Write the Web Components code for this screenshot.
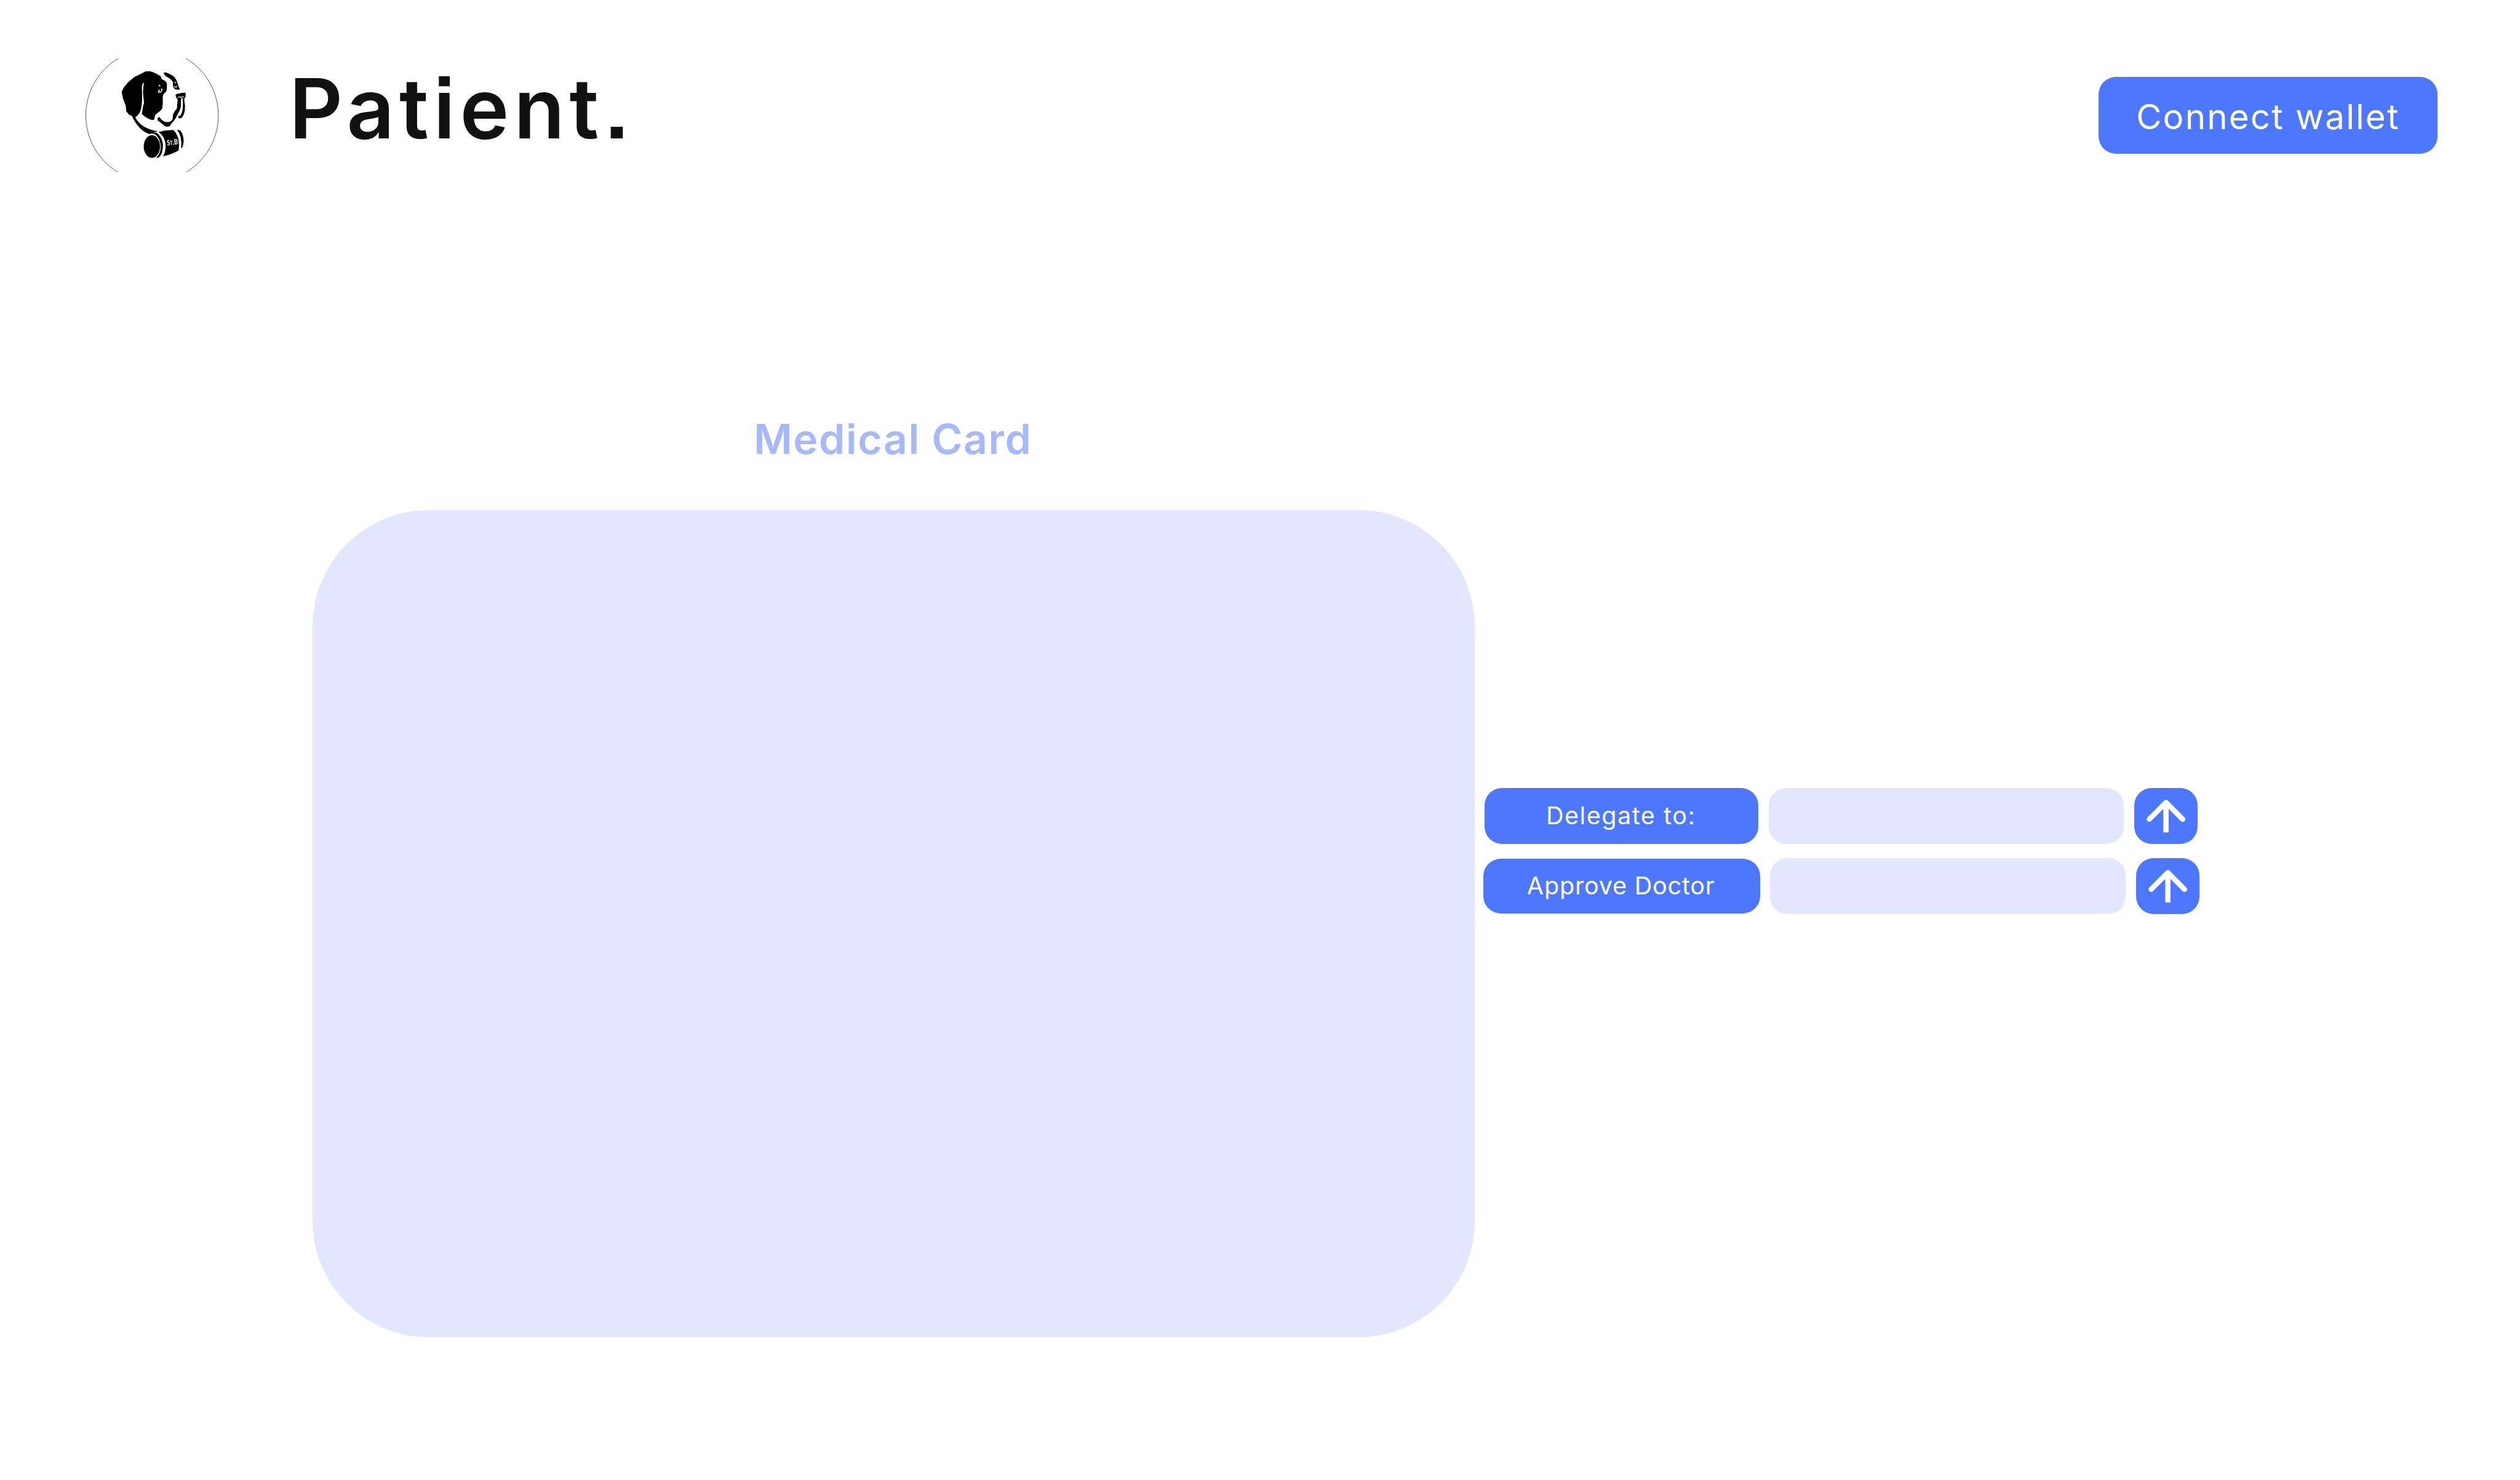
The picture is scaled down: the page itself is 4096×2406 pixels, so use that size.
<!DOCTYPE html>
<html lang="en">
<head>
<meta charset="utf-8">
<title>Patient</title>
<style>
  /* 1rem = 10 design units; the design canvas is 4320 units wide */
  html { font-size: calc(100vw / 432); }
  body { margin: 0; background: #fff; font-family: Inter, "Liberation Sans", sans-serif; font-feature-settings: "ss07", "ss08"; overflow: hidden; }
</style>
</head>
<body>
<patient-page></patient-page>

<template id="t-page">
  <style>
    :host { display: flex; flex-direction: column; width: 432rem; height: 253.8rem; box-sizing: border-box; }
    main { display: flex; align-items: flex-start; padding-left: 53.55rem; }
    .actions { display: flex; flex-direction: column; align-items: center; margin: 95.72rem 0 0 1.47rem; }
    .actions action-row + action-row { margin-top: 2.37rem; }
  </style>
  <app-header></app-header>
  <main>
    <medical-card>Medical Card</medical-card>
    <div class="actions">
      <action-row style="--label-w:46.85rem;--label-h:9.63rem;--ls:.0391em">Delegate to:</action-row>
      <action-row style="--label-w:47.45rem;--label-h:9.3rem;--ls:.0204em">Approve Doctor</action-row>
    </div>
  </main>
</template>

<template id="t-header">
  <style>
    :host { display: flex; height: 39.4rem; align-items: flex-start; box-sizing: border-box; padding: 9.9rem 14.1rem 0 14.6rem; }
    h1 { margin: 0 auto 0 11.76rem; height: 17.5rem; line-height: 17.5rem; font-size: 14.25rem; font-weight: 600; letter-spacing: .0574em; color: #111; white-space: nowrap; }
    pill-button { margin-top: 3.3rem; }
  </style>
  <brand-logo></brand-logo>
  <h1>Patient.</h1>
  <pill-button>Connect wallet</pill-button>
</template>

<template id="t-pill">
  <style>
    :host { display: block; }
    button { all: unset; box-sizing: border-box; display: flex; align-items: center; justify-content: center; width: 58.2rem; height: 13.18rem; padding-top: .5rem; border-radius: 3rem; background: #4d77ff; color: #fff; font-size: 5.95rem; letter-spacing: .039em; line-height: 1.2; white-space: nowrap; }
  </style>
  <button><slot></slot></button>
</template>

<template id="t-card">
  <style>
    :host { display: flex; flex-direction: column; width: 199.23rem; padding-top: 30.85rem; }
    h2 { margin: 0; height: 10rem; line-height: 10rem; padding-right: .18rem; text-align: center; font-size: 7.15rem; font-weight: 600; letter-spacing: .0236em; color: #a6b9ff; }
    section { margin-top: 7.15rem; height: 141.93rem; border-radius: 20rem; background: #e2e7ff; }
  </style>
  <h2><slot></slot></h2>
  <section></section>
</template>

<template id="t-row">
  <style>
    :host { display: flex; align-items: center; gap: 1.78rem; height: 9.63rem; }
    .label { display: flex; align-items: center; justify-content: center; box-sizing: border-box; width: var(--label-w); height: var(--label-h); padding-right: .2rem; border-radius: 3rem; background: #4d77ff; color: #fff; font-size: 4.17rem; letter-spacing: var(--ls); line-height: 1.2; white-space: nowrap; }
    .field { width: 60.9rem; height: 9.63rem; border-radius: 3rem; background: #e2e7ff; }
    .go { display: block; width: 10.87rem; height: 9.63rem; border-radius: 3rem; background: #4d77ff; }
    svg { display: block; width: 100%; height: 100%; }
  </style>
  <div class="label"><slot></slot></div>
  <div class="field"></div>
  <div class="go">
    <svg viewBox="0 0 108.7 96.3" fill="none" stroke="#fff" stroke-width="9">
      <path d="M25.8 53.5 54.4 24.9 83 53.5" stroke-linecap="round" stroke-linejoin="round"/>
      <path d="M54.4 26V76.2"/>
    </svg>
  </div>
</template>

<template id="t-logo">
  <style>
    :host { display: block; width: 23.2rem; height: 19.6rem; }
    svg { display: block; width: 100%; height: 100%; }
  </style>
  <svg viewBox="48 57 696 588">
    <clipPath id="band"><rect x="48" y="60" width="696" height="584"/></clipPath>
    <circle cx="393.500" cy="353" r="341" fill="none" stroke="#222" stroke-width="2.400" clip-path="url(#band)"/>
    <!-- ear, face and collar strap -->
    <path d="M237 233 248 210 270 183 302 156 335 140 360 127Q375 124 391 128L412 137 438 152Q440 164 446 168L460 176Q467 180 470 190L469 222Q467 231 460 236 450 243 448 256L449 285Q448 305 445 319 441 327 428 336 411 346 409 354L404 375Q396 378 386 375 360 366 341 346 343 330 347 308L352 288 348 250Q345 220 352 184 342 190 341 208L342 240 342 275Q340 320 329 340 320 354 307 363 320 389 350 410 380 428 425 436L404 440 380 449Q345 438 322 408 300 382 291 357L275 350 261 333 258 303 245 270Z"/>
    <path fill="#fff" d="M432 196 438 202 432 204 426 200ZM428 220 434 222 430 231Q440 232 441 222L439 216Q446 214 447 220 445 232 438 236L423 236Z"/>
    <!-- far brow -->
    <path d="M453 133Q463 130 475 136 497 144 510 158 521 170 525 190L531 208 537 221 514 220Q502 212 501 202L500 180Q492 166 476 158 460 151 456 142Z"/>
    <path fill="#fff" d="M509 181 516 182 516 188 510 187ZM508 199Q512 208 518 206L518 199 522 202 521 210 508 210Z"/>
    <!-- nose, muzzle and chin -->
    <path d="M514 248Q516 243 528 241 545 236 566 236L566 256Q559 264 559 276 565 300 562 328 559 348 548 363 540 371 530 367 525 361 530 355L540 354Q552 332 552 300L551 266 546 261 542 275 541 312Q534 335 524 350 515 370 505 382 493 392 484 409 471 414 459 408 446 397 432 386L422 379Q420 369 427 361 436 364 441 374 455 387 472 388 489 388 498 374 501 366 501 349 507 332 521 318L524 285 525 273Q515 262 514 248Z"/>
    <path d="M527 263Q533 254 542 261 551 250 557 261" fill="none" stroke="#fff" stroke-width="3.500"/>
    <!-- barrel -->
    <ellipse cx="392.500" cy="513.500" rx="42" ry="58.500"/>
    <path d="M382 448Q400 438 418 443 443 461 449 500 451 545 430 569L412 572Q436 553 438 518 437 470 408 450 396 445 382 448Z"/>
    <path d="M427 438Q465 428 503 428 523 447 530 480 535 508 530 533 500 552 450 564 464 540 463 503 459 460 427 438Z"/>
    <path d="M521 427 539 430Q555 452 556 483 555 508 546 522L543 519Q546 490 540 463 533 440 521 427Z"/>
    <text x="471" y="508" transform="rotate(-7 471 508)" fill="#fff" font-family="Lato, sans-serif" font-weight="700" font-size="38" textLength="57" lengthAdjust="spacingAndGlyphs">S<tspan font-size="30">T</tspan>.B</text>
  </svg>
</template>

<script>
  const define = (name, templateId) =>
    customElements.define(name, class extends HTMLElement {
      constructor() {
        super();
        this.attachShadow({ mode: 'open' })
            .append(document.getElementById(templateId).content.cloneNode(true));
      }
    });
  define('brand-logo', 't-logo');
  define('pill-button', 't-pill');
  define('app-header', 't-header');
  define('medical-card', 't-card');
  define('action-row', 't-row');
  define('patient-page', 't-page');
</script>
</body>
</html>
